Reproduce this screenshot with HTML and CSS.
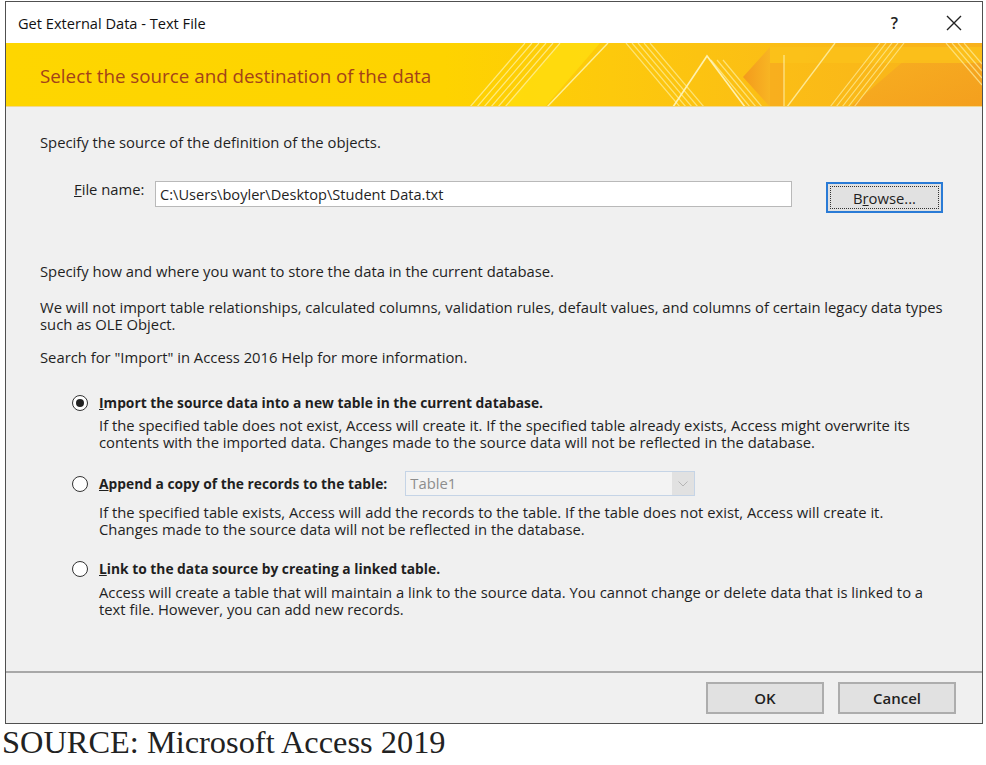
FILE: index.html
```html
<!DOCTYPE html>
<html lang="en">
<head>
<meta charset="utf-8">
<title>Get External Data - Text File</title>
<link rel="stylesheet" href="styles.css">
</head>
<body>
<div class="dialog">
  <div class="titlebar">
    <span class="title">Get External Data - Text File</span>
    <div class="controls">
      <span class="help">?</span>
      <svg class="close" width="16" height="16" viewBox="0 0 16 16"><path d="M1 1 L15 15 M15 1 L1 15" stroke="#222" stroke-width="1.4" fill="none"/></svg>
    </div>
  </div>

  <div class="banner">
    <svg class="banner-art" width="976" height="64" viewBox="6 43 976 64" preserveAspectRatio="none">
      <defs>
        <linearGradient id="bg" x1="0" y1="0" x2="1" y2="0">
          <stop offset="0" stop-color="#fed600"/>
          <stop offset="0.45" stop-color="#fed300"/>
          <stop offset="0.62" stop-color="#fdc90c"/>
          <stop offset="0.8" stop-color="#fbbd16"/>
          <stop offset="1" stop-color="#f8b11c"/>
        </linearGradient>
        <linearGradient id="arrow" x1="0" y1="0" x2="1" y2="0">
          <stop offset="0" stop-color="#f39a1c"/>
          <stop offset="1" stop-color="#f8b523"/>
        </linearGradient>
        <linearGradient id="rightor" x1="0" y1="0" x2="1" y2="1">
          <stop offset="0" stop-color="#f7ad22"/>
          <stop offset="1" stop-color="#f39c1e"/>
        </linearGradient>
      </defs>
      <rect x="6" y="43" width="976" height="64" fill="url(#bg)"/>
      <polygon points="505,107 560,43 600,43 545,107" fill="#ffdf10" opacity="0.7"/>
      <g stroke="#fff3a8" stroke-width="1.2" opacity="0.75">
        <line x1="470" y1="107" x2="525" y2="43"/>
        <line x1="477" y1="107" x2="532" y2="43"/>
        <line x1="484" y1="107" x2="539" y2="43"/>
        <line x1="491" y1="107" x2="546" y2="43"/>
        <line x1="498" y1="107" x2="553" y2="43"/>
        <line x1="505" y1="107" x2="560" y2="43"/>
      </g>
      <line x1="547" y1="107" x2="608" y2="43" stroke="#fff6b0" stroke-width="1.4" opacity="0.85"/>
      <g stroke="#fff1a0" stroke-width="1.2" opacity="0.7">
        <line x1="626" y1="43" x2="680" y2="107"/>
        <line x1="632" y1="43" x2="686" y2="107"/>
        <line x1="638" y1="43" x2="692" y2="107"/>
        <line x1="644" y1="43" x2="698" y2="107"/>
        <line x1="650" y1="43" x2="704" y2="107"/>
        <line x1="711" y1="60" x2="750" y2="107"/>
        <line x1="717" y1="60" x2="756" y2="107"/>
        <line x1="723" y1="60" x2="762" y2="107"/>
      </g>
      <polyline points="673,107 707,56 745,107" fill="none" stroke="#fff6c0" stroke-width="1.6" opacity="0.9"/>
      <polygon points="850,107 905,60 982,60 982,107" fill="url(#rightor)" opacity="0.85"/>
      <polygon points="743,77 770,47 770,107" fill="url(#arrow)"/>
      <rect x="770" y="47" width="212" height="16" fill="#fbc21a" opacity="0.8"/>
      <rect x="770" y="63" width="14" height="44" fill="#f6a822" opacity="0.7"/>
      <line x1="784" y1="55" x2="784" y2="107" stroke="#fff3b0" stroke-width="1.2" opacity="0.8"/>
      <line x1="787" y1="107" x2="835" y2="43" stroke="#fff3b0" stroke-width="1.4" opacity="0.8"/>
      <g stroke="#ffefa0" stroke-width="1.2" opacity="0.7">
        <line x1="830" y1="107" x2="880" y2="43"/>
        <line x1="836" y1="107" x2="886" y2="43"/>
        <line x1="842" y1="107" x2="892" y2="43"/>
        <line x1="848" y1="107" x2="898" y2="43"/>
        <line x1="854" y1="107" x2="904" y2="43"/>
      </g>
      <g stroke="#ffefa0" stroke-width="1.2" opacity="0.7">
        <line x1="946" y1="43" x2="982" y2="85"/>
        <line x1="952" y1="43" x2="982" y2="78"/>
        <line x1="958" y1="43" x2="982" y2="71"/>
        <line x1="964" y1="43" x2="982" y2="64"/>
      </g>
      <line x1="6" y1="106.5" x2="982" y2="106.5" stroke="#f1d890" stroke-width="1"/>
    </svg>
    <h1 class="banner-title">Select the source and destination of the data</h1>
  </div>

  <div class="content">
    <p class="line first">Specify the source of the definition of the objects.</p>

    <div class="file-row">
      <label class="file-label"><u>F</u>ile name:</label>
      <div class="file-input">C:\Users\boyler\Desktop\Student Data.txt</div>
      <div class="browse"><span class="focus">B<u>r</u>owse...</span></div>
    </div>

    <p class="line p2">Specify how and where you want to store the data in the current database.</p>
    <div class="para p3">
      <p class="line">We will not import table relationships, calculated columns, validation rules, default values, and columns of certain legacy data types</p>
      <p class="line">such as OLE Object.</p>
    </div>
    <p class="line p4">Search for "Import" in Access 2016 Help for more information.</p>

    <div class="option opt1">
      <div class="opt-head">
        <span class="radio checked"></span>
        <span class="opt-label"><u>I</u>mport the source data into a new table in the current database.</span>
      </div>
      <div class="opt-desc">
        <p class="line">If the specified table does not exist, Access will create it. If the specified table already exists, Access might overwrite its</p>
        <p class="line">contents with the imported data. Changes made to the source data will not be reflected in the database.</p>
      </div>
    </div>

    <div class="option opt2">
      <div class="opt-head">
        <span class="radio"></span>
        <span class="opt-label"><u>A</u>ppend a copy of the records to the table:</span>
        <div class="combo">
          <span class="combo-text">Table1</span>
          <span class="combo-btn"><svg width="10" height="6" viewBox="0 0 10 6"><path d="M0.5 0.5 L5 5 L9.5 0.5" fill="none" stroke="#b5b5b5" stroke-width="1"/></svg></span>
        </div>
      </div>
      <div class="opt-desc">
        <p class="line">If the specified table exists, Access will add the records to the table. If the table does not exist, Access will create it.</p>
        <p class="line">Changes made to the source data will not be reflected in the database.</p>
      </div>
    </div>

    <div class="option opt3">
      <div class="opt-head">
        <span class="radio"></span>
        <span class="opt-label"><u>L</u>ink to the data source by creating a linked table.</span>
      </div>
      <div class="opt-desc">
        <p class="line">Access will create a table that will maintain a link to the source data. You cannot change or delete data that is linked to a</p>
        <p class="line">text file. However, you can add new records.</p>
      </div>
    </div>
  </div>

  <div class="footer">
    <div class="btn">OK</div>
    <div class="btn">Cancel</div>
  </div>
</div>
<p class="source">SOURCE: Microsoft Access 2019</p>
</body>
</html>
```

FILE: styles.css
```css
* { box-sizing: border-box; }

html, body {
  margin: 0;
  padding: 0;
  background: #ffffff;
}

body {
  font-family: "Open Sans", "Noto Sans", sans-serif;
  font-size: 14.8px;
  color: #1f1f1f;
}

.dialog {
  margin: 1px 0 0 5px;
  width: 978px;
  height: 723px;
  border: 1px solid #505050;
  background: #f0f0f0;
  display: flex;
  flex-direction: column;
}

.titlebar {
  height: 41px;
  flex: none;
  background: #ffffff;
  display: flex;
  align-items: center;
  justify-content: space-between;
  padding: 0 20px 0 12px;
}

.title {
  font-size: 14.6px;
  color: #111;
}

.controls {
  display: flex;
  align-items: center;
  gap: 48px;
}

.help {
  font-size: 16px;
  font-weight: 600;
  color: #222;
}

.close { display: block; }

.banner {
  position: relative;
  height: 65px;
  flex: none;
  display: flex;
  align-items: center;
  padding-left: 34px;
  overflow: hidden;
}

.banner-art {
  position: absolute;
  left: 0;
  top: 0;
}

.banner-title {
  position: relative;
  margin: 0;
  font-size: 18.8px;
  font-weight: 400;
  color: #a3421a;
}

.content {
  flex: 1;
  padding: 26px 0 0 34px;
}

.line {
  margin: 0;
  height: 17px;
  line-height: 17px;
  white-space: nowrap;
}

.para { display: flex; flex-direction: column; }

.file-row {
  display: flex;
  align-items: flex-start;
  margin-top: 30px;
  height: 31px;
}

.file-label {
  margin-left: 34px;
  line-height: 17px;
  width: 81px;
  flex: none;
}

.file-input {
  width: 637px;
  height: 26px;
  background: #ffffff;
  border: 1px solid #b9b9b9;
  padding: 0 4px;
  line-height: 24px;
  flex: none;
  font-size: 14.6px;
}

.browse {
  margin-left: 34px;
  margin-top: 1px;
  width: 117px;
  height: 31px;
  border: 2px solid #2a7bd6;
  background: #e1e1e1;
  padding: 2px;
  display: flex;
  flex: none;
}

.focus {
  flex: 1;
  border: 1px dotted #333;
  display: flex;
  align-items: center;
  justify-content: center;
}

.p2 { margin-top: 51px; }
.p3 { margin-top: 19px; }
.p4 { margin-top: 16px; }

.option { margin-left: 32px; }
.opt1 { margin-top: 28px; }
.opt2 { margin-top: 20px; }
.opt3 { margin-top: 22px; }

.opt-head {
  display: flex;
  align-items: center;
  height: 17px;
}

.opt2 .opt-head { height: 25px; }

.radio {
  width: 16px;
  height: 16px;
  border-radius: 50%;
  border: 1px solid #333;
  background: #fff;
  flex: none;
  margin-right: 11px;
  display: flex;
  align-items: center;
  justify-content: center;
}

.radio.checked::after {
  content: "";
  width: 8px;
  height: 8px;
  border-radius: 50%;
  background: #222;
}

.opt-label {
  font-weight: 700;
  font-size: 13.8px;
  white-space: nowrap;
}

.opt-desc {
  margin: 6px 0 0 27px;
  display: flex;
  flex-direction: column;
}

.opt2 .opt-desc { margin-top: 8px; }
.opt3 .opt-desc { margin-top: 7px; }

.combo {
  margin-left: 18px;
  width: 290px;
  height: 25px;
  border: 1px solid #c5d4e6;
  background: #f3f3f3;
  display: flex;
  align-items: stretch;
}

.combo-text {
  flex: 1;
  padding-left: 4px;
  line-height: 23px;
  color: #8d8d8d;
}

.combo-btn {
  width: 22px;
  background: #e1e1e1;
  display: flex;
  align-items: center;
  justify-content: center;
}

.footer {
  flex: none;
  height: 52px;
  border-top: 2px solid #a8a8a8;
  display: flex;
  justify-content: flex-end;
  gap: 14px;
  padding: 9px 26px 0 0;
}

.btn {
  width: 118px;
  height: 32px;
  background: #e1e1e1;
  border: 2px solid #adadad;
  display: flex;
  align-items: center;
  justify-content: center;
  font-weight: 600;
  font-size: 15px;
}

.source {
  margin: 0;
  padding-left: 2px;
  font-family: "Liberation Serif", "Times New Roman", serif;
  font-size: 32.4px;
  line-height: 36px;
  color: #222;
}
```
